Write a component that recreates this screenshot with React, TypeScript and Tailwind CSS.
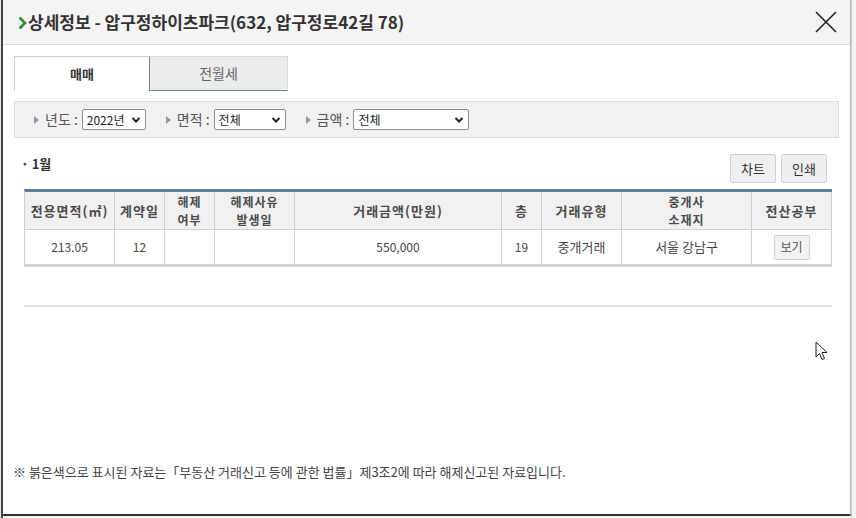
import React from "react";

const font = { fontFamily: '"Noto Sans CJK KR", "Noto Sans", sans-serif' };

function Chevron() {
  return (
    <svg width="10" height="8" viewBox="0 0 10 8" className="ml-auto mr-[4px]">
      <path d="M1.5 2 L5 5.5 L8.5 2" stroke="#222" strokeWidth="2" fill="none" />
    </svg>
  );
}

function Tri() {
  return (
    <svg width="5" height="8" viewBox="0 0 5 8" className="mr-[6px]">
      <path d="M0 0 L5 4 L0 8 Z" fill="#999" />
    </svg>
  );
}

function Select({ w, text }: { w: string; text: string }) {
  return (
    <div className={`${w} h-[21px] flex items-center border border-[#8f8f8f] rounded-[2px] bg-white pl-[4px] text-[12px] text-[#222]`}>
      <span>{text}</span>
      <Chevron />
    </div>
  );
}

function Two({ a, b }: { a: string; b: string }) {
  return (
    <div className="flex flex-col items-center text-[12px]">
      <span className="block leading-[18px]">{a}</span>
      <span className="block leading-[18px]">{b}</span>
    </div>
  );
}

export default function App() {
  const th = "border-r border-[#cfcfcf] text-center text-[13px] font-bold text-[#4a4a4a] leading-[18px] tracking-[1px]";
  const td = "border-r border-[#cfcfcf] text-center text-[12px] text-[#444]";
  return (
    <div className="w-[856px] h-[518px] bg-[#f7f7f7] flex" style={font}>
      <div className="w-[3px] h-full bg-[#e8e8e8] border-r-2 border-[#444]" />
      <div className="w-[848px] h-[516px] bg-white border-b-2 border-[#333] border-r border-r-[#b5b5b5] flex flex-col">
        {/* header */}
        <div className="h-[45px] bg-[#f4f4f4] border-b border-[#d9d9d9] flex items-center pl-[15px] pr-[10px] shrink-0">
          <svg width="9" height="14" viewBox="0 0 9 14" className="mr-[1px] mt-[1px]">
            <path d="M1.5 1.5 L7 7 L1.5 12.5" stroke="#2e8b3a" strokeWidth="2.6" fill="none" />
          </svg>
          <span className="text-[17px] font-bold text-[#333] tracking-[0px]">상세정보 - 압구정하이츠파크(632, 압구정로42길 78)</span>
          <svg width="24" height="24" viewBox="0 0 24 24" className="ml-auto mr-[2px]">
            <path d="M2 2 L22 22 M22 2 L2 22" stroke="#222" strokeWidth="1.6" />
          </svg>
        </div>
        {/* tabs */}
        <div className="flex pl-[11px] mt-[11px] h-[35px] shrink-0">
          <div className="w-[136px] h-full bg-white border-l border-t border-[#c8d2c9] border-r border-r-[#6f8f74] flex items-center justify-center text-[13px] font-bold text-[#333]">
            매매
          </div>
          <div className="w-[138px] h-full bg-[#ececec] border-t border-r border-[#dadada] border-b border-b-[#6f8f74] flex items-center justify-center text-[14px] text-[#666]">
            전월세
          </div>
        </div>
        {/* filter */}
        <div className="mx-[11px] mt-[10px] h-[37px] bg-[#f1f1f1] border border-[#dcdcdc] flex items-center pl-[19px] text-[14px] text-[#555] shrink-0">
          <Tri />
          <span className="mr-[4px]">년도 :</span>
          <Select w="w-[64px]" text="2022년" />
          <span className="w-[20px]" />
          <Tri />
          <span className="mr-[4px]">면적 :</span>
          <Select w="w-[72px]" text="전체" />
          <span className="w-[20px]" />
          <Tri />
          <span className="mr-[4px]">금액 :</span>
          <Select w="w-[116px]" text="전체" />
        </div>
        {/* month + buttons */}
        <div className="flex items-start mt-[16px] pl-[18px] pr-[23px] h-[29px] shrink-0">
          <span className="text-[13px] font-bold text-[#333] leading-[19px]">· 1월</span>
          <div className="ml-auto flex gap-[5px]">
            <div className="w-[46px] h-[29px] bg-[#efefef] border border-[#cfcfcf] rounded-[2px] flex items-center justify-center text-[13px] text-[#333]">차트</div>
            <div className="w-[46px] h-[29px] bg-[#efefef] border border-[#cfcfcf] rounded-[2px] flex items-center justify-center text-[13px] text-[#333]">인쇄</div>
          </div>
        </div>
        {/* table */}
        <div className="mx-[21px] mt-[6px] w-[808px] border-t-[3px] border-[#5b7d99] border-l border-l-[#cfcfcf] border-b-[3px] border-b-[#d4d4d4] shrink-0">
          <div className="grid grid-cols-[90px_50px_50px_80px_207px_40px_80px_130px_80px] h-[38px] bg-[#f0f0f0] border-b border-[#cfcfcf]">
            <div className={`${th} flex items-center justify-center tracking-[0.5px]`}>전용면적(㎡)</div>
            <div className={`${th} flex items-center justify-center tracking-[0px]`}>계약일</div>
            <div className={`${th} flex items-center justify-center`}><Two a="해제" b="여부" /></div>
            <div className={`${th} flex items-center justify-center`}><Two a="해제사유" b="발생일" /></div>
            <div className={`${th} flex items-center justify-center`}>거래금액(만원)</div>
            <div className={`${th} flex items-center justify-center`}>층</div>
            <div className={`${th} flex items-center justify-center`}>거래유형</div>
            <div className={`${th} flex items-center justify-center`}><Two a="중개사" b="소재지" /></div>
            <div className={`${th} flex items-center justify-center`}>전산공부</div>
          </div>
          <div className="grid grid-cols-[90px_50px_50px_80px_207px_40px_80px_130px_80px] h-[34px] bg-white">
            <div className={`${td} flex items-center justify-center`}>213.05</div>
            <div className={`${td} flex items-center justify-center`}>12</div>
            <div className={td} />
            <div className={td} />
            <div className={`${td} flex items-center justify-center`}>550,000</div>
            <div className={`${td} flex items-center justify-center`}>19</div>
            <div className={`${td} flex items-center justify-center text-[13px]`}>중개거래</div>
            <div className={`${td} flex items-center justify-center text-[13px]`}>서울 강남구</div>
            <div className={`${td} flex items-center justify-center`}>
              <div className="w-[36px] h-[25px] bg-[#f3f3f3] border border-[#cfcfcf] rounded-[2px] flex items-center justify-center text-[12px] text-[#555]">보기</div>
            </div>
          </div>
        </div>
        {/* separator */}
        <div className="mx-[21px] mt-[38px] w-[808px] h-[2px] bg-[#e0e0e0] shrink-0" />
        <div className="relative flex-1">
          <svg width="14" height="20" viewBox="0 0 14 20" className="absolute left-[812px] top-[34px]">
            <path d="M1 1 L1 16 L4.5 12.5 L7 18.5 L9.5 17.5 L7 11.5 L12 11.5 Z" fill="white" stroke="#222" strokeWidth="1" strokeLinejoin="round" />
          </svg>
        </div>
        <div className="pl-[10px] pb-[33px] text-[13px] text-[#444] shrink-0">
          ※ 붉은색으로 표시된 자료는「부동산 거래신고 등에 관한 법률」제3조2에 따라 해제신고된 자료입니다.
        </div>
      </div>
      <div className="flex-1 h-full bg-[#f3f3f3] border-l border-[#cfcfcf]" />
    </div>
  );
}
